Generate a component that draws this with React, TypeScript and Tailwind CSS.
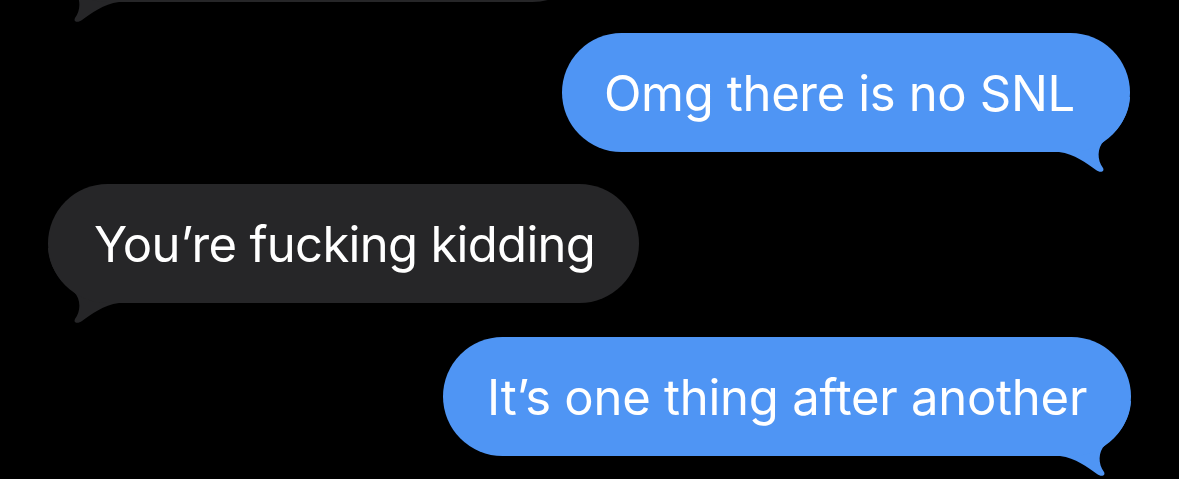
import React from "react";

const BLUE = "#4f95f4";
const GRAY = "#262628";

function Tail({ color, side }: { color: string; side: "left" | "right" }) {
  return (
    <svg
      width="80"
      height="80"
      viewBox="0 0 80 80"
      className={
        side === "right"
          ? "absolute right-0 bottom-[-25px] overflow-visible"
          : "absolute left-0 bottom-[-25px] overflow-visible -scale-x-100"
      }
    >
      <path
        d="M80 0 C79 20 67 35 54 44 C47 51 47 63 53 71 C55 75 50 76 46 73 C36 66 25 57 9 55 L0 55 L0 0 Z"
        fill={color}
      />
    </svg>
  );
}

function Bubble({
  text,
  color,
  side,
  width,
  pl,
  tracking,
}: {
  text: string;
  color: string;
  side: "left" | "right";
  width: string;
  pl: string;
  tracking: string;
}) {
  return (
    <div className={`relative h-[119px] ${width}`}>
      <Tail color={color} side={side} />
      <div
        className={`relative flex h-full w-full items-center rounded-[60px] ${pl} ${tracking} whitespace-nowrap text-white text-[49px] leading-none`}
        style={{ backgroundColor: color, fontFamily: "Inter, 'Noto Sans', sans-serif" }}
      >
        <span className="relative top-[1px]">{text}</span>
      </div>
    </div>
  );
}

export default function App() {
  return (
    <div className="w-[1179px] h-[479px] bg-black overflow-hidden">
      <div className="flex flex-col">
        <div className="relative h-[119px] w-[544px] ml-[48px] mt-[-117px]">
          <Tail color={GRAY} side="left" />
          <div className="relative h-full w-full rounded-[60px]" style={{ backgroundColor: GRAY }} />
        </div>
        <div className="self-end mr-[49px] mt-[31px]">
          <Bubble text="Omg there is no SNL" color={BLUE} side="right" width="w-[568px]" pl="pl-[42px]" tracking="tracking-[-0.35px]" />
        </div>
        <div className="self-start ml-[48px] mt-[32px]">
          <Bubble text="You’re fucking kidding" color={GRAY} side="left" width="w-[591px]" pl="pl-[46px]" tracking="tracking-[-0.7px]" />
        </div>
        <div className="self-end mr-[48px] mt-[34px]">
          <Bubble text="It’s one thing after another" color={BLUE} side="right" width="w-[688px]" pl="pl-[44px]" tracking="tracking-[-0.25px]" />
        </div>
      </div>
    </div>
  );
}
